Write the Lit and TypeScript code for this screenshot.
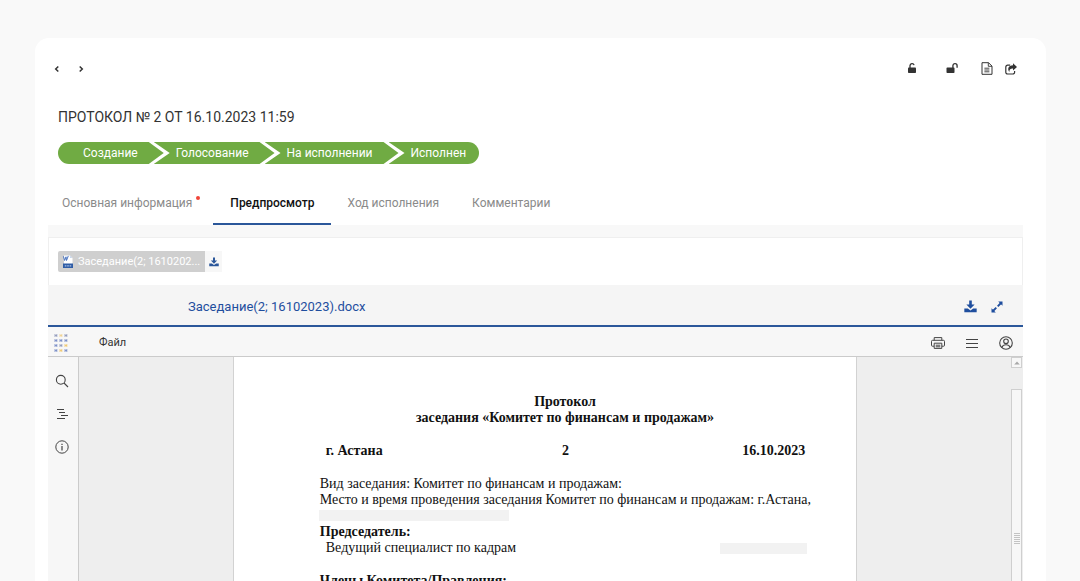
import { LitElement, html, css, svg } from "lit";
import { customElement } from "lit/decorators.js";
import { classMap } from "lit/directives/class-map.js";

const icons = {
  prev: html`<svg width="6" height="8" viewBox="0 0 6 8" fill="none" stroke="currentColor" stroke-width="1.5"><path d="M4.300 1.500 1.700 4l2.600 2.500"/></svg>`,
  next: html`<svg width="6" height="8" viewBox="0 0 6 8" fill="none" stroke="currentColor" stroke-width="1.5"><path d="M1.700 1.500 4.300 4 1.700 6.500"/></svg>`,
  lock: html`<svg width="10" height="12" viewBox="0 0 10 12"><rect x="1" y="5.6" width="8" height="5.4" rx="0.8" fill="currentColor"/><path d="M3 6V3.600a2.100 2.100 0 0 1 4.100-.5" fill="none" stroke="currentColor" stroke-width="1.3"/></svg>`,
  unlock: html`<svg width="12" height="12" viewBox="0 0 12 12"><rect x="0.5" y="5.6" width="8" height="5.4" rx="0.8" fill="currentColor"/><path d="M6.900 6V3.800a2.100 2.100 0 0 1 4.200 0v2" fill="none" stroke="currentColor" stroke-width="1.3"/></svg>`,
  file: html`<svg width="12" height="13" viewBox="0 0 12 13" fill="none" stroke="currentColor"><path d="M1 .7h6.500l3.500 3.400v8.200H1z"/><path d="M7.300.8v3.500H11M3.400 6.200h5M3.400 8h5M3.400 9.800h5" stroke-width=".9"/></svg>`,
  share: html`<svg width="12" height="12" viewBox="0 0 12 12"><path d="M5.200 2.200H2.600A1.800 1.800 0 0 0 .8 4v5.200A1.800 1.800 0 0 0 2.600 11h5.200a1.800 1.800 0 0 0 1.800-1.800V8" fill="none" stroke="currentColor" stroke-width="1.200"/><path d="M8 .3 12 3.900 8 7.500V5.500C5.600 5.400 4.500 6 4.300 9 2.100 5.800 3.400 2.400 8 2.300z" fill="currentColor"/></svg>`,
  word: html`<svg width="12" height="14" viewBox="0 0 12 14"><path d="M2 .5h6l2.500 2.500V9H2z" fill="#fff"/><path d="M8 .5 10.500 3H8z" fill="#c9d6ea"/><path d="m1.400 1.300 1.200 4.200L4 1.800l.5 3.700L6.300.9" fill="none" stroke="#4a74c0" stroke-width="1"/><rect x="1" y="8.500" width="10" height="4.500" fill="#2f5da6"/><path d="M2.800 10.800h6.400" stroke="#a9c0e4" stroke-width="1.200" stroke-dasharray="1.600 .8"/></svg>`,
  grip: html`<svg width="6" height="12" viewBox="0 0 6 12" stroke="#c3c3c3"><path d="M0 .5h6M0 2.500h6M0 4.500h6M0 6.500h6M0 8.500h6M0 10.500h6"/></svg>`,
  up: html`<svg width="6" height="4" viewBox="0 0 6 4"><path d="M3 .5 5.800 3.500H.2z" fill="#a8a8a8"/></svg>`,
  expand: html`<svg width="12" height="12" viewBox="0 0 12 12"><path d="M7.200.5h4.300v4.300zM.5 7.200v4.300h4.300z" fill="currentColor"/><path d="M10 2 6.700 5.300M2 10l3.300-3.300" stroke="currentColor" stroke-width="1.900"/></svg>`,
  print: html`<svg width="14" height="12" viewBox="0 0 14 12" fill="none" stroke="currentColor"><path d="M3.200 3.300V.6h7.600v2.700M3 9.200H1.300a.8.800 0 0 1-.8-.8V4.300c0-.6.4-1 1-1h11c.6 0 1 .4 1 1v4.100a.8.800 0 0 1-.8.800H11"/><path d="M3.200 6.200h7.600v5.200H3.200zM4.700 8.200h4.600M4.700 9.800h4.600"/></svg>`,
  menu: html`<svg width="12" height="10" viewBox="0 0 12 10" stroke="currentColor"><path d="M0 1.500h12M0 5.500h12M0 9.500h12"/></svg>`,
  user: html`<svg width="14" height="14" viewBox="0 0 14 14" fill="none" stroke="currentColor" stroke-width="1.100"><circle cx="7" cy="7" r="6.300"/><circle cx="7" cy="5.300" r="2.300"/><path d="M2.800 11.500c.7-1.900 2.300-2.800 4.200-2.800s3.500.9 4.200 2.800"/></svg>`,
  search: html`<svg width="14" height="14" viewBox="0 0 14 14" fill="none" stroke="currentColor" stroke-width="1.100"><circle cx="5.800" cy="5.800" r="4.400"/><path d="m9 9 4 4"/></svg>`,
  outline: html`<svg width="12" height="10" viewBox="0 0 12 10" stroke="currentColor"><path d="M1 .5h7M3 3.500h6M5 6.500h7M1 9.500h8"/></svg>`,
  info: html`<svg width="14" height="14" viewBox="0 0 14 14" fill="none" stroke="currentColor"><circle cx="7" cy="7" r="6.200"/><path d="M7 3.700v1.200M7 6v4.500" stroke-width="1.200"/></svg>`,
};

const download = (size: number) => html`<svg width=${size} height=${size} viewBox="0 0 12 12" fill="currentColor"><path d="M4.800.5h2.400v3.700h2.600L6 8 2.200 4.200h2.600z"/><path d="M.3 7.800h3.200L6 9.600l2.500-1.800h3.200v3.400H.3z"/></svg>`;

const logoColors = [
  ["#8a94b8", "#efcf8a", "#8a94b8"],
  ["#7186c4", "#7186c4", "#7186c4"],
  ["#7186c4", "#8a94b8", "#f0c566"],
  ["#7186c4", "#f0c566", "#7186c4"],
];

const logo = html`<svg width="14" height="18" viewBox="0 0 14 18">
  ${logoColors.map((row, y) => row.map((color, x) => svg`<path d="M${x * 5 + 1} ${y * 5}v3M${x * 5 + 2.8} ${y * 5}v3M${x * 5 + 1} ${y * 5 + 1.5}h2" fill="none" stroke=${color} stroke-width=".8"/>`))}
</svg>`;

const steps = ["Создание", "Голосование", "На исполнении", "Исполнен"];

const tabs = [
  { label: "Основная информация", alert: true },
  { label: "Предпросмотр", active: true },
  { label: "Ход исполнения" },
  { label: "Комментарии" },
];

@customElement("doc-page")
class DocPage extends LitElement {
  static styles = css`
    :host {
      display: block;
      box-sizing: border-box;
      padding: 37px 38px 0 86px;
      background: #fff;
      border: 1px solid #d2d2d2;
      border-width: 0 1px;
      color: #111;
      font: 14px/16px "Liberation Serif", "Times New Roman", serif;
    }
    h2, h3, p { margin: 0; font-size: inherit; }
    h2 { padding-right: 8px; text-align: center; }
    .facts {
      display: grid;
      grid-template-columns: 1fr auto 1fr;
      margin: 17px 13px 17px 6px;
      font-weight: 700;
    }
    .date { text-align: right; }
    .line { white-space: nowrap; }
    .mask { background: #f2f2f2; height: 11px; }
    .place { width: 190px; margin: 2px 0 3px -1px; }
    .name { width: 87px; }
    .person {
      display: flex;
      align-items: center;
      justify-content: space-between;
      padding: 0 11px 0 6px;
      margin-bottom: 17px;
    }
  `;

  render() {
    return html`
      <h2>Протокол<br />заседания «Комитет по финансам и продажам»</h2>
      <div class="facts"><span>г. Астана</span><span>2</span><span class="date">16.10.2023</span></div>
      <p class="line">Вид заседания: Комитет по финансам и продажам:</p>
      <p class="line">Место и время проведения заседания Комитет по финансам и продажам: г.Астана,</p>
      <div class="mask place"></div>
      <h3>Председатель:</h3>
      <div class="person"><span>Ведущий специалист по кадрам</span><span class="mask name"></span></div>
      <h3>Члены Комитета/Правления:</h3>
    `;
  }
}

@customElement("app-root")
class AppRoot extends LitElement {
  static styles = css`
    :host {
      display: flex;
      height: 100vh;
      box-sizing: border-box;
      padding: 38px 34px 0 35px;
      overflow: hidden;
      background: #f9f9f9;
      color: #333;
      font: 12px/16px Roboto, "Liberation Sans", sans-serif;
    }
    * { box-sizing: border-box; }
    button {
      display: inline-flex;
      align-items: center;
      justify-content: center;
      margin: 0;
      padding: 0;
      border: 0;
      background: none;
      color: inherit;
      font: inherit;
      cursor: pointer;
    }
    a { color: inherit; text-decoration: none; }
    svg { display: block; flex: none; }
    .card {
      flex: 1;
      min-width: 0;
      display: flex;
      flex-direction: column;
      padding: 19px 23px 0 13px;
      background: #fff;
      border-radius: 14px 14px 0 0;
    }
    .top { display: flex; align-items: center; height: 24px; }
    .top button { width: 24px; height: 24px; }
    .top .prev { margin-left: -3px; }
    .top .lock { margin-left: auto; padding-bottom: 2px; }
    .top .unlock { margin: 0 11px 0 16px; padding-bottom: 2px; }
    .top .file, .top .share { padding-bottom: 1px; }
    h1 {
      margin: 26px 10px 14px;
      font-size: 14px;
      line-height: 21px;
      font-weight: 400;
    }
    .steps { display: flex; margin: 0 10px; padding: 0; list-style: none; }
    .step {
      height: 22px;
      padding: 0 26px 0 22px;
      margin-left: -10px;
      background: #70ab43;
      color: #fff;
      line-height: 22px;
      white-space: nowrap;
      clip-path: polygon(0 0, calc(100% - 15px) 0, 100% 50%, calc(100% - 15px) 100%, 0 100%, 16px 50%);
    }
    .step:first-child {
      margin-left: 0;
      padding-left: 25px;
      border-radius: 11px 0 0 11px;
      clip-path: polygon(0 0, calc(100% - 15px) 0, 100% 50%, calc(100% - 15px) 100%, 0 100%);
    }
    .step:last-child {
      padding-right: 13px;
      border-radius: 0 11px 11px 0;
      clip-path: polygon(0 0, 100% 0, 100% 100%, 0 100%, 16px 50%);
    }
    .tabs { display: flex; margin-top: 16px; }
    .tab {
      height: 45px;
      padding: 2px 16px 0 17px;
      color: #8a8a8a;
      border-bottom: 2px solid transparent;
      white-space: nowrap;
    }
    .tab:first-child { padding-left: 14px; }
    .tab.active { color: #111; font-weight: 500; border-color: #2b579a; }
    .alert {
      width: 4px;
      height: 4px;
      margin: 0 -3px 9px 4px;
      border-radius: 50%;
      background: #f04438;
    }
    .strip { height: 12px; background: #f8f8f8; }
    .files {
      display: flex;
      height: 48px;
      padding: 13px 9px;
      border: 1px solid #efefef;
      border-width: 1px 1px 0;
    }
    .files .chip {
      height: 21px;
      gap: 4px;
      padding: 0 5px 0 4px;
      border-radius: 2px 0 0 2px;
      background: #cfcfcf;
      color: #fff;
      font-size: 11px;
    }
    .files .save { width: 17px; height: 21px; background: #f7f7f7; color: #2b579a; }
    .files, .head { flex: none; }
    .head {
      display: flex;
      align-items: center;
      gap: 14px;
      height: 42px;
      padding: 3px 20px 0 140px;
      background: #f5f5f5;
      border-bottom: 2px solid #2b579a;
      color: #1f4e9e;
    }
    .head a { margin-right: auto; font-size: 13px; }
    .bar {
      flex: none;
      display: flex;
      align-items: center;
      height: 30px;
      padding: 2px 10px 0 6px;
      background: #f7f7f7;
      border-bottom: 1px solid #cbcbcb;
      color: #444;
    }
    .bar .menu { margin: 0 auto 0 31px; font-size: 11px; color: #333; }
    .bar .tools { display: flex; gap: 21px; }
    .work { flex: 1; min-height: 0; display: flex; background: #eee; overflow: hidden; }
    .side {
      display: flex;
      flex-direction: column;
      align-items: center;
      gap: 19px;
      width: 31px;
      padding: 17px 3px 0 0;
      background: #f7f7f7;
      border-right: 1px solid #cbcbcb;
      color: #444;
    }
    .side button { width: 26px; height: 14px; }
    .canvas { flex: 1; display: flex; justify-content: center; min-width: 0; }
    doc-page { width: 67%; }
    .scroll {
      display: flex;
      flex-direction: column;
      gap: 21px;
      width: 12px;
      padding-right: 1px;
    }
    .scroll .arrow { height: 11px; border: 1px solid #cfcfcf; background: #f7f7f7; }
    .thumb {
      flex: 1;
      display: flex;
      align-items: center;
      justify-content: center;
      padding-top: 106px;
      border: 1px solid #cfcfcf;
      border-bottom: 0;
      background: #f7f7f7;
    }
  `;

  render() {
    return html`
      <main class="card">
        <div class="top">
          <button class="prev" aria-label="Назад">${icons.prev}</button>
          <button aria-label="Вперёд">${icons.next}</button>
          <button class="lock" aria-label="Заблокировать">${icons.lock}</button>
          <button class="unlock" aria-label="Разблокировать">${icons.unlock}</button>
          <button class="file" aria-label="Документ">${icons.file}</button>
          <button class="share" aria-label="Поделиться">${icons.share}</button>
        </div>
        <h1>ПРОТОКОЛ № 2 ОТ 16.10.2023 11:59</h1>
        <ol class="steps">${steps.map((s) => html`<li class="step">${s}</li>`)}</ol>
        <div class="tabs" role="tablist">
          ${tabs.map((t) => html`<button role="tab" aria-selected=${t.active ? "true" : "false"}
            class=${classMap({ tab: true, active: !!t.active })}>${t.label}${t.alert ? html`<span class="alert"></span>` : ""}</button>`)}
        </div>
        <div class="strip"></div>
        <div class="files">
          <button class="chip">${icons.word}<span>Заседание(2; 1610202...</span></button>
          <button class="save" aria-label="Скачать файл">${download(10)}</button>
        </div>
        <div class="head">
          <a href="#">Заседание(2; 16102023).docx</a>
          <button aria-label="Скачать">${download(13)}</button>
          <button aria-label="На весь экран">${icons.expand}</button>
        </div>
        <div class="bar">
          ${logo}
          <button class="menu">Файл</button>
          <div class="tools">
            <button aria-label="Печать">${icons.print}</button>
            <button aria-label="Меню">${icons.menu}</button>
            <button aria-label="Профиль">${icons.user}</button>
          </div>
        </div>
        <div class="work">
          <div class="side">
            <button aria-label="Поиск">${icons.search}</button>
            <button aria-label="Навигация">${icons.outline}</button>
            <button aria-label="О программе">${icons.info}</button>
          </div>
          <div class="canvas"><doc-page></doc-page></div>
          <div class="scroll">
            <button class="arrow" aria-label="Прокрутить вверх">${icons.up}</button>
            <div class="thumb">${icons.grip}</div>
          </div>
        </div>
      </main>
    `;
  }
}
